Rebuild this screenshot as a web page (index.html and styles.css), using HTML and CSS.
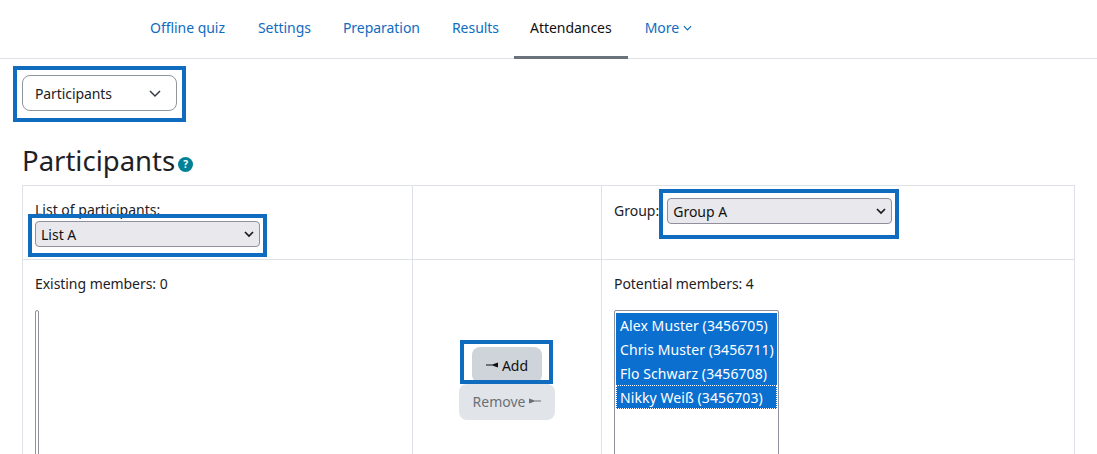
FILE: index.html
```html
<!DOCTYPE html>
<html lang="en">
<head>
<meta charset="utf-8">
<title>Participants</title>
<link rel="stylesheet" href="styles.css">
</head>
<body>
<nav class="tabs">
  <a class="tab tab-first">Offline quiz</a>
  <a class="tab">Settings</a>
  <a class="tab">Preparation</a>
  <a class="tab tab-results">Results</a>
  <a class="tab active">Attendances</a>
  <a class="tab tab-more">More
    <svg class="more-chevron" viewBox="0 0 10 6" width="9" height="6"><path d="M1 1l4 4 4-4" fill="none" stroke="currentColor" stroke-width="1.3"/></svg>
  </a>
</nav>
<main class="content">
  <div class="tertiary">
    <div class="nav-select">
      <span>Participants</span>
      <svg class="nav-chevron" viewBox="0 0 12 8" width="12" height="8"><path d="M1 1l5 5 5-5" fill="none" stroke="#343a40" stroke-width="1.5"/></svg>
    </div>
  </div>
  <h2 class="title">Participants<span class="help">?</span></h2>
  <div class="grid">
    <div class="cell top">
      <div class="label">List of participants:</div>
      <div class="select wide"><span>List A</span><svg viewBox="0 0 10 7" width="10" height="7"><path d="M1 1l4 4 4-4" fill="none" stroke="#1a1a1a" stroke-width="1.7"/></svg></div>
    </div>
    <div class="cell top"></div>
    <div class="cell top group-cell">
      <span class="group-label">Group:</span>
      <div class="select wide"><span>Group A</span><svg viewBox="0 0 10 7" width="10" height="7"><path d="M1 1l4 4 4-4" fill="none" stroke="#1a1a1a" stroke-width="1.7"/></svg></div>
    </div>
    <div class="cell body">
      <div class="members">Existing members: 0</div>
      <div class="listbox empty"></div>
    </div>
    <div class="cell body actions">
      <button class="btn add"><svg viewBox="0 0 12 6" width="12" height="6"><path d="M0 2.4h7v1.2H0zM7 2.2L12 .5v5L7 3.8z" fill="#111"/></svg> Add</button>
      <button class="btn remove">Remove <svg viewBox="0 0 12 6" width="12" height="6"><path d="M12 2.4H5v1.2h7zM5 2.2L0 .5v5l5-1.7z" fill="#6a7075"/></svg></button>
    </div>
    <div class="cell body">
      <div class="members">Potential members: 4</div>
      <div class="listbox">
        <div class="option">Alex Muster (3456705)</div>
        <div class="option">Chris Muster (3456711)</div>
        <div class="option">Flo Schwarz (3456708)</div>
        <div class="option focused">Nikky Weiß (3456703)</div>
      </div>
    </div>
  </div>
</main>
<div class="mark mark-nav"></div>
<div class="mark mark-list"></div>
<div class="mark mark-group"></div>
<div class="mark mark-add"></div>
</body>
</html>
```
FILE: styles.css
```css
* { box-sizing: border-box; }
html, body { margin: 0; height: 454px; overflow: hidden; }
body {
  position: relative;
  background: #fff;
  color: #1d2125;
  font-family: "Noto Sans", "Open Sans", sans-serif;
  font-size: 14px;
}
.tabs {
  display: flex;
  height: 59px;
  padding-left: 134px;
  border-bottom: 1px solid #dee2e6;
}
.tab {
  display: flex;
  align-items: center;
  gap: 4px;
  height: 59px;
  padding: 0 16px 1px;
  color: #0f6cbf;
  letter-spacing: -0.04px;
  border-bottom: 3px solid transparent;
}
.tab-first { padding-right: 17px; }
.tab-results { padding-right: 15px; }
.tab-more { padding-left: 17px; }
.tab.active { color: #111; border-bottom-color: #6a737b; }
.more-chevron { margin-top: 1px; }
.content { padding: 0 22px; }
.tertiary { padding-top: 16px; }
.nav-select {
  display: flex;
  align-items: center;
  justify-content: space-between;
  width: 155px;
  height: 36px;
  padding: 0 15px 0 12px;
  border: 1px solid #8f959e;
  border-radius: 8px;
  letter-spacing: -0.1px;
}
.nav-chevron { margin-top: 1px; }
.title {
  display: flex;
  align-items: center;
  height: 40px;
  margin: 30px 0 4px;
  font-size: 27.5px;
  font-weight: 400;
  line-height: 40px;
}
.help {
  display: flex;
  align-items: center;
  justify-content: center;
  width: 15px;
  height: 15px;
  margin: 6px 0 0 3px;
  border-radius: 50%;
  background: #008196;
  color: #fff;
  font-size: 10px;
  font-weight: 700;
  line-height: 1;
}
.grid {
  display: grid;
  grid-template-columns: 390px 189px 473px;
  grid-template-rows: 74px 300px;
  width: 1053px;
  border-top: 1px solid #dee2e6;
  border-left: 1px solid #dee2e6;
}
.cell {
  padding: 12px;
  border-right: 1px solid #dee2e6;
  border-bottom: 1px solid #dee2e6;
}
.label { line-height: 23px; height: 23px; }
.select {
  display: flex;
  align-items: center;
  justify-content: space-between;
  height: 26px;
  padding: 0 5px;
  border: 1px solid #8f8f9d;
  border-radius: 4px;
  background: #e9e9ed;
  color: #111;
}
.wide { width: 225px; }
.group-cell { display: flex; align-items: flex-start; gap: 8px; }
.group-label { line-height: 26px; }
.members { line-height: 24px; letter-spacing: -0.05px; }
.listbox {
  width: 165px;
  height: 200px;
  margin-top: 14px;
  padding: 2px 1px;
  border: 1px solid #8f8f9d;
  border-radius: 2px;
}
.listbox.empty { width: 4px; }
.option {
  height: 24px;
  padding: 2px 4px 0;
  background: #0b6fd0;
  color: #fff;
  letter-spacing: 0.08px;
  line-height: 22px;
  white-space: nowrap;
}
.option.focused { outline: 1px dotted #fff; outline-offset: -1px; }
.actions {
  display: flex;
  flex-direction: column;
  align-items: center;
  gap: 1px;
  padding-top: 87px;
}
.btn {
  display: flex;
  align-items: center;
  justify-content: center;
  gap: 4px;
  height: 36px;
  padding: 0;
  border: 0;
  border-radius: 8px;
  font: inherit;
}
.add { width: 70px; background: #ced4da; color: #111; }
.remove { width: 96px; padding-bottom: 2px; background: #e1e4e8; color: #6a7075; }
.mark { position: absolute; border: 4px solid #0f6cbf; }
.mark-nav { left: 13px; top: 66px; width: 173px; height: 56px; }
.mark-list { left: 28px; top: 214px; width: 239px; height: 43px; }
.mark-group { left: 659px; top: 189px; width: 240px; height: 50px; }
.mark-add { left: 460px; top: 340px; width: 93px; height: 44px; }
```
